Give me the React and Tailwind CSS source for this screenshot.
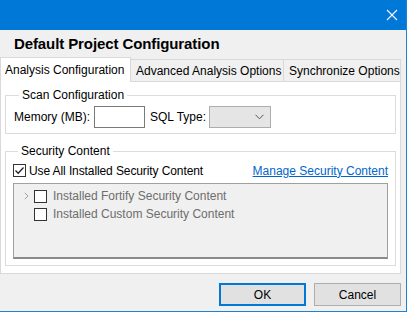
import React from 'react'

const font = { fontFamily: '"Liberation Sans", Arial, sans-serif' }

const Tab = ({ label, active, width }) => (
  <div
    className={
      active
        ? 'h-[25px] bg-white border border-b-0 border-[#d9d9d9] flex items-start pt-[4px] pl-[4px] relative z-10 -mb-px'
        : 'h-[22px] bg-[#f0f0f0] border border-l-0 border-b-0 border-[#d9d9d9] flex items-center pl-[5px]'
    }
    style={{ width }}
  >
    <span className="text-[12px] leading-[16px] text-black whitespace-nowrap">{label}</span>
  </div>
)

const Check = ({ checked }) => (
  <span className="w-[13px] h-[13px] border border-[#333333] bg-white flex items-center justify-center shrink-0">
    {checked && (
      <svg width="11" height="11" viewBox="0 0 11 11">
        <path d="M1.5 5.5 L4.2 8.3 L9.5 2.5" fill="none" stroke="#222" strokeWidth="1.3" />
      </svg>
    )}
  </span>
)

export default function App() {
  return (
    <div className="w-[407px] h-[312px] bg-[#f0f0f0] border-r border-b border-[#1883d7] flex flex-col overflow-hidden" style={font}>
      {/* title bar */}
      <div className="h-[30px] bg-[#0078d7] flex items-center justify-end pr-[8px] shrink-0">
        <svg width="12" height="12" viewBox="0 0 12 12">
          <path d="M1 1 L11 11 M11 1 L1 11" stroke="white" strokeWidth="1.1" />
        </svg>
      </div>

      {/* heading */}
      <div className="h-[27px] flex items-center pl-[14px] shrink-0">
        <span className="text-[15px] font-bold text-black leading-[18px] tracking-[-0.1px]">Default Project Configuration</span>
      </div>

      {/* tabs */}
      <div className="flex items-end h-[24px] shrink-0">
        <Tab label="Analysis Configuration" active width={131} />
        <Tab label="Advanced Analysis Options" width={153} />
        <Tab label="Synchronize Options" width={117} />
      </div>

      {/* panel */}
      <div className="w-[401px] h-[193px] bg-white border border-[#d9d9d9] px-[4px] pt-[5px] flex flex-col gap-[9px] shrink-0">
        <fieldset className="border border-[#dcdcdc] px-[8px] pb-[5px] pt-[3px]">
          <legend className="ml-[5px] px-[3px] text-[12px] leading-[16px] text-black">Scan Configuration</legend>
          <div className="flex items-center text-[12px] text-black">
            <span className="mr-[4px]">Memory (MB):</span>
            <span className="w-[51px] h-[22px] border border-[#7a7a7a] bg-white" />
            <span className="ml-[5px] mr-[3px]">SQL Type:</span>
            <span className="w-[62px] h-[22px] border border-[#adadad] bg-[#e5e5e5] flex items-center justify-end pr-[6px]">
              <svg width="9" height="6" viewBox="0 0 9 6">
                <path d="M0.5 0.8 L4.5 4.8 L8.5 0.8" fill="none" stroke="#555" strokeWidth="1" />
              </svg>
            </span>
          </div>
        </fieldset>

        <fieldset className="border border-[#dcdcdc] px-[7px] pb-[6px] pt-[4px]">
          <legend className="ml-[5px] px-[3px] text-[12px] leading-[16px] text-black">Security Content</legend>
          <div className="flex items-center justify-between h-[15px] text-[12px]">
            <div className="flex items-center gap-[3px]">
              <Check checked />
              <span className="text-black tracking-[-0.1px]">Use All Installed Security Content</span>
            </div>
            <span className="text-[#0066cc] underline">Manage Security Content</span>
          </div>
          <div className="mt-[5px] h-[76px] bg-[#f0f0f0] border border-[#a0a0a0] border-b-2 border-b-[#8a8a8a] pt-[3px] text-[12px] text-[#6d6d6d]">
            <div className="flex items-center h-[18px]">
              <span className="w-[20px] flex justify-center pl-[4px]">
                <svg width="5" height="8" viewBox="0 0 5 8">
                  <path d="M0.8 0.8 L4 4 L0.8 7.2" fill="none" stroke="#a0a0a0" strokeWidth="1" />
                </svg>
              </span>
              <Check />
              <span className="ml-[6px]">Installed Fortify Security Content</span>
            </div>
            <div className="flex items-center h-[18px]">
              <span className="w-[20px]" />
              <Check />
              <span className="ml-[6px]">Installed Custom Security Content</span>
            </div>
          </div>
        </fieldset>
      </div>

      {/* footer buttons */}
      <div className="flex-1 flex items-start justify-end gap-[8px] pt-[9px] pr-[5px]">
        <button className="w-[87px] h-[23px] bg-[#e1e1e1] border-2 border-[#0078d7] text-[12px] text-black">OK</button>
        <button className="w-[87px] h-[23px] bg-[#e1e1e1] border border-[#adadad] text-[12px] text-black">Cancel</button>
      </div>
    </div>
  )
}
